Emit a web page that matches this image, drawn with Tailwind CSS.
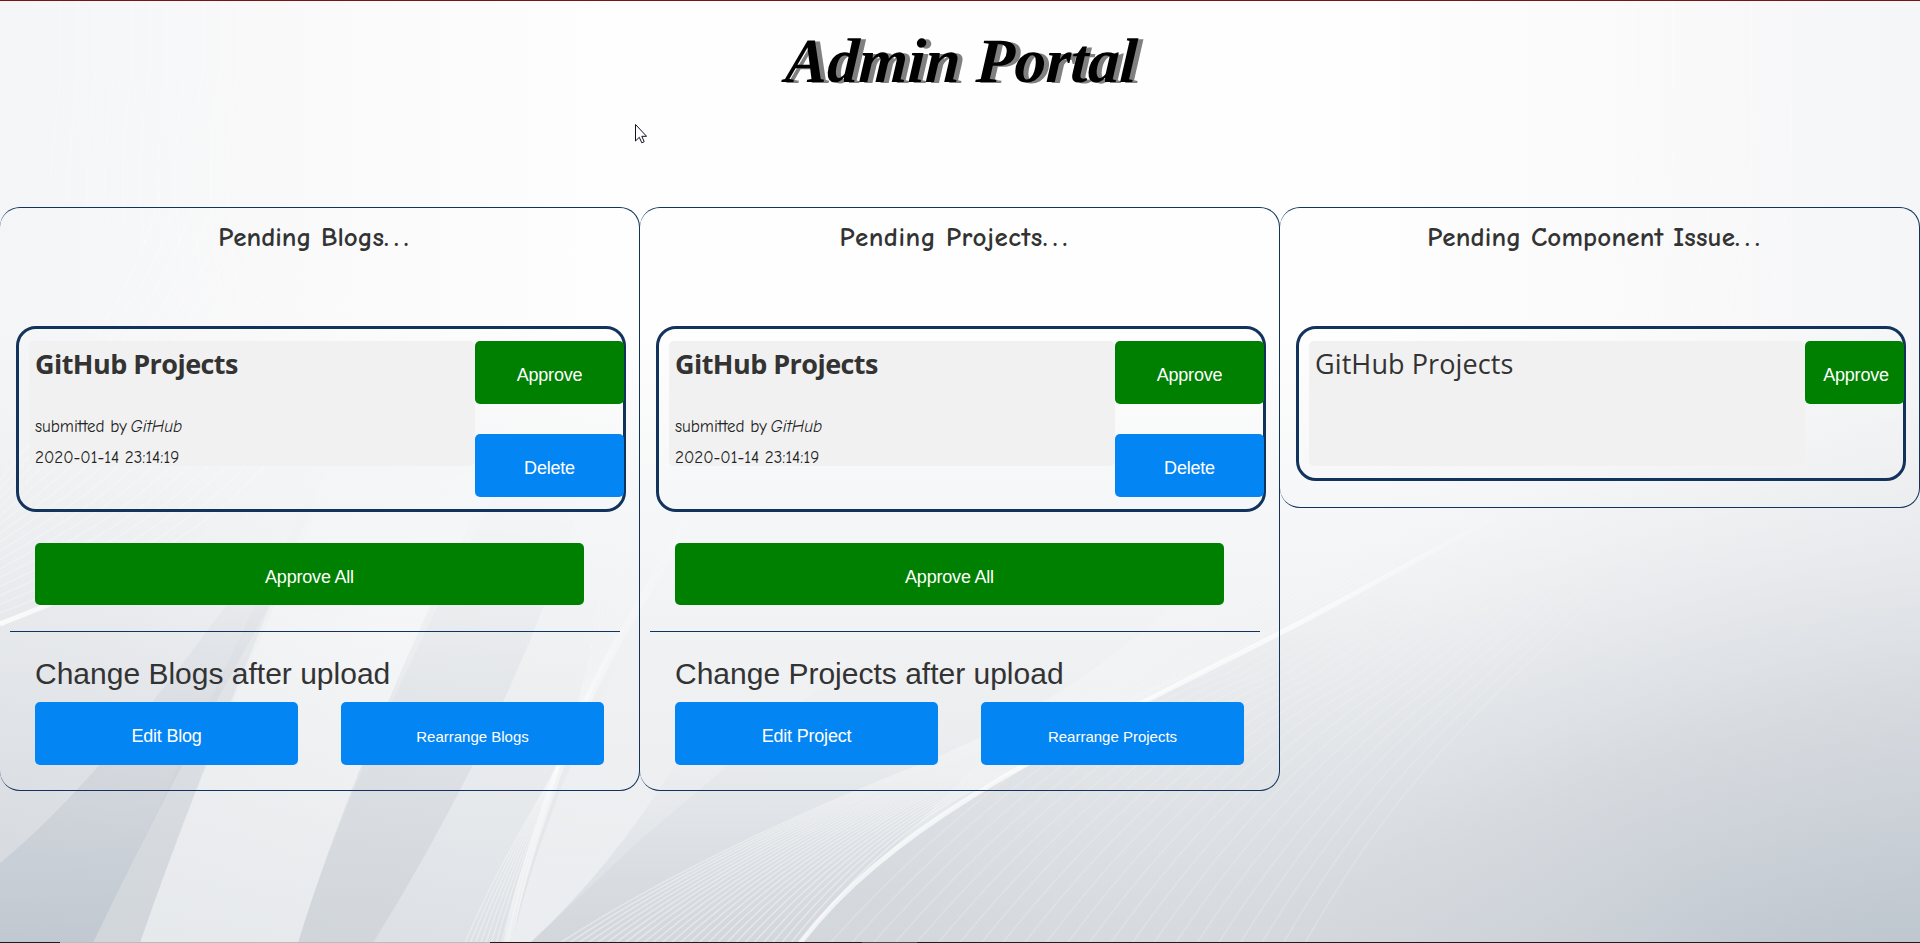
<!DOCTYPE html>
<html lang="en">
<head>
<meta charset="utf-8">
<title>Admin Portal</title>
<script src="https://cdn.jsdelivr.net/npm/@tailwindcss/browser@4"></script>
</head>
<body class="relative h-[943px] w-[1920px] overflow-hidden bg-white font-['Liberation_Sans',Arial,sans-serif] text-[#333]">

<!-- abstract silver backdrop -->
<svg class="absolute inset-0 -z-10 h-full w-full" viewBox="0 0 1920 943" preserveAspectRatio="none">
  <defs>
    <linearGradient id="left" x1="0" y1="0" x2="620" y2="0" gradientUnits="userSpaceOnUse"><stop offset="0" stop-color="#dfe1e6" stop-opacity=".3"/><stop offset="1" stop-color="#dfe1e6" stop-opacity="0"/></linearGradient>
    <linearGradient id="base" x1="0" y1="330" x2="0" y2="943" gradientUnits="userSpaceOnUse"><stop offset="0" stop-color="#e4e7ea" stop-opacity="0"/><stop offset=".35" stop-color="#e9ebee" stop-opacity=".45"/><stop offset="1" stop-color="#dde1e5"/></linearGradient>
    <radialGradient id="corner" cx="0" cy="0" r="1" gradientTransform="translate(1900 1110) rotate(-12) scale(1250 700)" gradientUnits="userSpaceOnUse"><stop offset="0" stop-color="#b5bec7"/><stop offset=".25" stop-color="#bfc7cf"/><stop offset=".6" stop-color="#cfd3d9" stop-opacity=".65"/><stop offset="1" stop-color="#e4e7ea" stop-opacity="0"/></radialGradient>
    <linearGradient id="right" x1="1920" y1="0" x2="1350" y2="0" gradientUnits="userSpaceOnUse"><stop offset="0" stop-color="#dfe1e6" stop-opacity=".28"/><stop offset="1" stop-color="#dfe1e6" stop-opacity="0"/></linearGradient>
    <radialGradient id="lcorner" cx="0" cy="0" r="1" gradientTransform="translate(0 860) scale(460 420)" gradientUnits="userSpaceOnUse"><stop offset="0" stop-color="#ccd1d8" stop-opacity=".5"/><stop offset="1" stop-color="#d4d8dd" stop-opacity="0"/></radialGradient>
    <linearGradient id="band" x1="0" y1="540" x2="0" y2="943" gradientUnits="userSpaceOnUse"><stop offset="0" stop-color="#cdd2d8" stop-opacity="0"/><stop offset=".6" stop-color="#c9ced5" stop-opacity=".55"/><stop offset="1" stop-color="#bfc7d0" stop-opacity=".95"/></linearGradient>
    <linearGradient id="band2" x1="0" y1="500" x2="0" y2="943" gradientUnits="userSpaceOnUse"><stop offset="0" stop-color="#cdd2d8" stop-opacity="0"/><stop offset="1" stop-color="#cbd0d6" stop-opacity=".65"/></linearGradient>
    <linearGradient id="band3" x1="0" y1="745" x2="0" y2="943" gradientUnits="userSpaceOnUse"><stop offset="0" stop-color="#cdd2d8" stop-opacity="0"/><stop offset="1" stop-color="#cbd0d6" stop-opacity=".6"/></linearGradient>
    <linearGradient id="light" x1="0" y1="440" x2="0" y2="943" gradientUnits="userSpaceOnUse"><stop offset="0" stop-color="#fff" stop-opacity="0"/><stop offset=".4" stop-color="#fff" stop-opacity=".35"/><stop offset="1" stop-color="#eceef0" stop-opacity=".7"/></linearGradient>
    <linearGradient id="light2" x1="0" y1="640" x2="0" y2="943" gradientUnits="userSpaceOnUse"><stop offset="0" stop-color="#fff" stop-opacity="0"/><stop offset="1" stop-color="#f4f5f7" stop-opacity=".6"/></linearGradient>
    <linearGradient id="slope" x1="920" y1="943" x2="1400" y2="540" gradientUnits="userSpaceOnUse"><stop offset="0" stop-color="#c9ced4" stop-opacity=".5"/><stop offset="1" stop-color="#dfe2e5" stop-opacity="0"/></linearGradient>
    <linearGradient id="fadeR" x1="940" y1="900" x2="1560" y2="440" gradientUnits="userSpaceOnUse"><stop offset="0" stop-color="#fff"/><stop offset=".6" stop-color="#fff" stop-opacity=".9"/><stop offset=".9" stop-color="#fff" stop-opacity="0"/></linearGradient>
    <linearGradient id="strandMask" x1="0" y1="943" x2="0" y2="440" gradientUnits="userSpaceOnUse"><stop offset="0" stop-color="#fff"/><stop offset=".5" stop-color="#fff" stop-opacity=".8"/><stop offset=".85" stop-color="#fff" stop-opacity=".1"/><stop offset="1" stop-color="#fff" stop-opacity="0"/></linearGradient>
    <mask id="fadeUp" maskUnits="userSpaceOnUse" x="0" y="0" width="1920" height="943"><rect x="440" width="1480" height="943" fill="url(#strandMask)"/><rect width="440" height="943" fill="#fff"/><rect x="1300" width="620" height="440" fill="#fff"/></mask>
    <linearGradient id="ridgeL" x1="0" y1="0" x2="230" y2="0" gradientUnits="userSpaceOnUse"><stop offset="0" stop-color="#fff" stop-opacity=".8"/><stop offset="1" stop-color="#fff" stop-opacity="0"/></linearGradient>
  </defs>
  <rect width="1920" height="943" fill="#fefefe"/>
  <rect width="1920" height="943" fill="url(#left)"/>
  <rect width="1920" height="943" fill="url(#right)"/>
  <rect width="1920" height="943" fill="url(#base)"/>
  <rect width="1920" height="943" fill="url(#corner)"/>
  <rect width="700" height="943" fill="url(#lcorner)"/>
  <path d="M0 863 Q120 765 300 500 L330 500 Q190 740 93 943 L0 943Z" fill="url(#band)"/>
  <path d="M93 943 Q190 740 330 450 L345 450 Q210 740 140 943Z" fill="url(#band2)" opacity=".8"/>
  <path d="M140 943 Q210 740 345 430 L530 430 Q360 740 298 943Z" fill="url(#light)"/>
  <path d="M298 943 Q360 740 510 440 L600 440 Q530 690 373 943Z" fill="url(#band2)"/>
  <path d="M512 943 Q545 800 640 620 L900 620 L640 840 L530 943Z" fill="url(#light2)"/>
  <path d="M530 943 Q620 860 690 740 L1000 740 L800 943Z" fill="url(#band3)"/>
  <path d="M800 943 C900 815 1060 745 1300 623 C1380 580 1430 552 1500 515 L1920 515 V943Z" fill="url(#slope)"/>
  <g id="strands" fill="none" stroke="#fff" mask="url(#fadeUp)"></g>
  <path d="M800 943 C900 815 1060 745 1300 623 C1380 580 1430 552 1500 515" fill="none" stroke="url(#fadeR)" stroke-width="5" opacity=".7"/>
  <path d="M507 943 C522 870 545 810 562 760 C600 660 650 590 700 500" fill="none" stroke="url(#strandMask)" stroke-width="8" opacity=".45"/>
  <path d="M0 624 Q100 585 220 530" fill="none" stroke="url(#ridgeL)" stroke-width="5"/>
</svg>
<script>
  // Each sheaf is a family of curves blended between two boundary curves of the same shape.
  const sheaves = [
    [26, .38, 1.6, [560,943,680,865,830,800,920,765,1080,700,1200,600,1330,440], [800,943,880,840,950,795,1014,772,1110,720,1260,640,1500,515]],
    [22, .17, 1.8, [830,943,960,800,1100,700,1200,672,1300,610,1400,570,1480,440], [1305,943,1380,810,1450,740,1500,690,1560,630,1620,590,1700,440]],
    [9, .35, 1.4, [465,943,500,860,540,800,560,760,590,680,600,600,630,440], [512,943,525,870,545,810,562,760,600,660,650,590,720,440]],
    [16, .25, 1.6, [0,480,40,430,70,400,100,330,130,280,150,240,160,190], [0,622,90,590,160,560,230,500,300,430,360,380,420,330]],
    [10, .2, 2, [50,190,50,150,60,100,60,70,60,50,60,30,60,0], [240,300,220,200,230,100,240,70,240,50,240,30,240,0]],
    [10, .2, 2, [1390,330,1400,200,1400,120,1400,70,1400,50,1400,30,1400,0], [1760,330,1800,200,1790,120,1790,70,1790,50,1790,30,1790,0]]
  ];
  let d = '';
  for (const [n, o, w, a, b] of sheaves) {
    for (let i = 0; i <= n; i++) {
      const p = a.map((v, k) => (v + (b[k] - v) * i / n).toFixed(1));
      d += `<path d="M${p[0]} ${p[1]}C${p.slice(2).join(' ')}" stroke-opacity="${o}" stroke-width="${w}"/>`;
    }
  }
  document.getElementById('strands').innerHTML = d;
</script>

<div class="flex h-full flex-col border-t border-[#7a1419]">
  <header class="h-[206px] pt-[24px] pl-[3px] text-center">
    <h1 class="-skew-x-3 font-['Liberation_Serif','Times_New_Roman',serif] text-[63px] leading-[72px] font-bold text-black italic [text-shadow:5px_1px_0_#808080]">Admin Portal</h1>
  </header>

  <main class="grid grid-cols-3 items-start">
    <section class="h-[584px] rounded-[20px] border border-l-0 border-[#12335c]">
      <h2 class="mt-[14px] h-[104px] pr-[7px] text-center font-['Comic_Neue','Comic_Sans_MS',Lato,sans-serif] text-[27px] leading-[32px] font-bold">Pending Blogs<span class="tracking-[5px]">...</span></h2>
      <div class="ml-4 flex h-[186px] w-[610px] items-start rounded-[20px] border-3 border-[#12335c] pt-3 pl-[10px]">
        <div class="h-[125px] w-[446px] shrink-0 rounded-[5px] bg-[#f1f1f1] pl-[6px]">
          <h3 class="h-[76px] pt-[5px] font-['Open_Sans',sans-serif] text-[27px] leading-[36px] font-bold tracking-[-0.55px]">GitHub Projects</h3>
          <p class="h-[31px] font-['Comic_Neue','Comic_Sans_MS',Lato,sans-serif] text-[17px] leading-[20px] text-[#222]">submitted by <i class="-ml-[2px]">GitHub</i></p>
          <p class="font-['Comic_Neue','Comic_Sans_MS',Lato,sans-serif] text-[17px] leading-[20px] text-[#222]">2020-01-14 23:14:19</p>
        </div>
        <div class="flex w-[149px] shrink-0 flex-col gap-[30px] text-lg text-white">
          <button class="h-[63px] rounded-[5px] bg-[#008000] pt-1 tracking-[-0.2px]">Approve</button>
          <button class="h-[63px] rounded-[5px] bg-[#0485f4] pt-1 tracking-[-0.2px]">Delete</button>
        </div>
      </div>
      <button class="mt-[31px] ml-[35px] h-[62px] w-[549px] rounded-[5px] bg-[#008000] pt-[5px] text-lg tracking-[-0.2px] text-white">Approve All</button>
      <hr class="mt-[26px] ml-[10px] w-[610px] border-[#12335c]">
      <h3 class="mt-[24px] ml-[35px] text-[30px] leading-[36px]">Change Blogs after upload</h3>
      <div class="mt-[10px] ml-[35px] flex gap-[43px] text-white">
        <button class="h-[63px] w-[263px] rounded-[5px] bg-[#0485f4] pt-[5px] text-lg tracking-[-0.2px]">Edit Blog</button>
        <button class="h-[63px] w-[263px] rounded-[5px] bg-[#0485f4] pt-[7px] text-[15px]">Rearrange Blogs</button>
      </div>
    </section>

    <section class="h-[584px] rounded-[20px] border border-l-0 border-[#12335c]">
      <h2 class="mt-[14px] h-[104px] pr-[7px] text-center font-['Comic_Neue','Comic_Sans_MS',Lato,sans-serif] text-[27px] leading-[32px] font-bold tracking-[0.5px]">Pending Projects<span class="tracking-[5px]">...</span></h2>
      <div class="ml-4 flex h-[186px] w-[610px] items-start rounded-[20px] border-3 border-[#12335c] pt-3 pl-[10px]">
        <div class="h-[125px] w-[446px] shrink-0 rounded-[5px] bg-[#f1f1f1] pl-[6px]">
          <h3 class="h-[76px] pt-[5px] font-['Open_Sans',sans-serif] text-[27px] leading-[36px] font-bold tracking-[-0.55px]">GitHub Projects</h3>
          <p class="h-[31px] font-['Comic_Neue','Comic_Sans_MS',Lato,sans-serif] text-[17px] leading-[20px] text-[#222]">submitted by <i class="-ml-[2px]">GitHub</i></p>
          <p class="font-['Comic_Neue','Comic_Sans_MS',Lato,sans-serif] text-[17px] leading-[20px] text-[#222]">2020-01-14 23:14:19</p>
        </div>
        <div class="flex w-[149px] shrink-0 flex-col gap-[30px] text-lg text-white">
          <button class="h-[63px] rounded-[5px] bg-[#008000] pt-1 tracking-[-0.2px]">Approve</button>
          <button class="h-[63px] rounded-[5px] bg-[#0485f4] pt-1 tracking-[-0.2px]">Delete</button>
        </div>
      </div>
      <button class="mt-[31px] ml-[35px] h-[62px] w-[549px] rounded-[5px] bg-[#008000] pt-[5px] text-lg tracking-[-0.2px] text-white">Approve All</button>
      <hr class="mt-[26px] ml-[10px] w-[610px] border-[#12335c]">
      <h3 class="mt-[24px] ml-[35px] text-[30px] leading-[36px]">Change Projects after upload</h3>
      <div class="mt-[10px] ml-[35px] flex gap-[43px] text-white">
        <button class="h-[63px] w-[263px] rounded-[5px] bg-[#0485f4] pt-[5px] text-lg tracking-[-0.2px]">Edit Project</button>
        <button class="h-[63px] w-[263px] rounded-[5px] bg-[#0485f4] pt-[7px] text-[15px]">Rearrange Projects</button>
      </div>
    </section>

    <section class="h-[301px] rounded-[20px] border border-l-0 border-[#12335c]">
      <h2 class="mt-[14px] h-[104px] pr-[7px] text-center font-['Comic_Neue','Comic_Sans_MS',Lato,sans-serif] text-[27px] leading-[32px] font-bold tracking-[0.15px]">Pending Component Issue<span class="tracking-[5px]">...</span></h2>
      <div class="ml-4 flex h-[155px] w-[610px] items-start rounded-[20px] border-3 border-[#12335c] pt-3 pl-[10px]">
        <div class="h-[125px] w-[496px] shrink-0 rounded-[5px] bg-[#f1f1f1] pl-[6px]">
          <h3 class="pt-[5px] font-['Open_Sans',sans-serif] text-[27px] leading-[36px] tracking-[0.1px]">GitHub Projects</h3>
        </div>
        <button class="h-[63px] w-[99px] shrink-0 rounded-[5px] bg-[#008000] pt-1 pl-[3px] text-lg tracking-[-0.2px] text-white">Approve</button>
      </div>
    </section>
  </main>

  <footer class="mt-auto flex h-px bg-[#1b1c20]"><span class="ml-[60px] w-[430px] bg-[#b9bbbd]"></span><span class="ml-[372px] w-[55px] bg-[#4a4b4e]"></span></footer>
</div>

<!-- mouse pointer -->
<svg class="absolute top-[124px] left-[635px] h-5 w-3" viewBox="0 0 12 20"><path d="M.5 .5V17L4.300 13.300L6.800 18.800L9.200 17.700L6.800 12.300H11.600Z" fill="#fff" stroke="#111122"/></svg>
</body>
</html>
